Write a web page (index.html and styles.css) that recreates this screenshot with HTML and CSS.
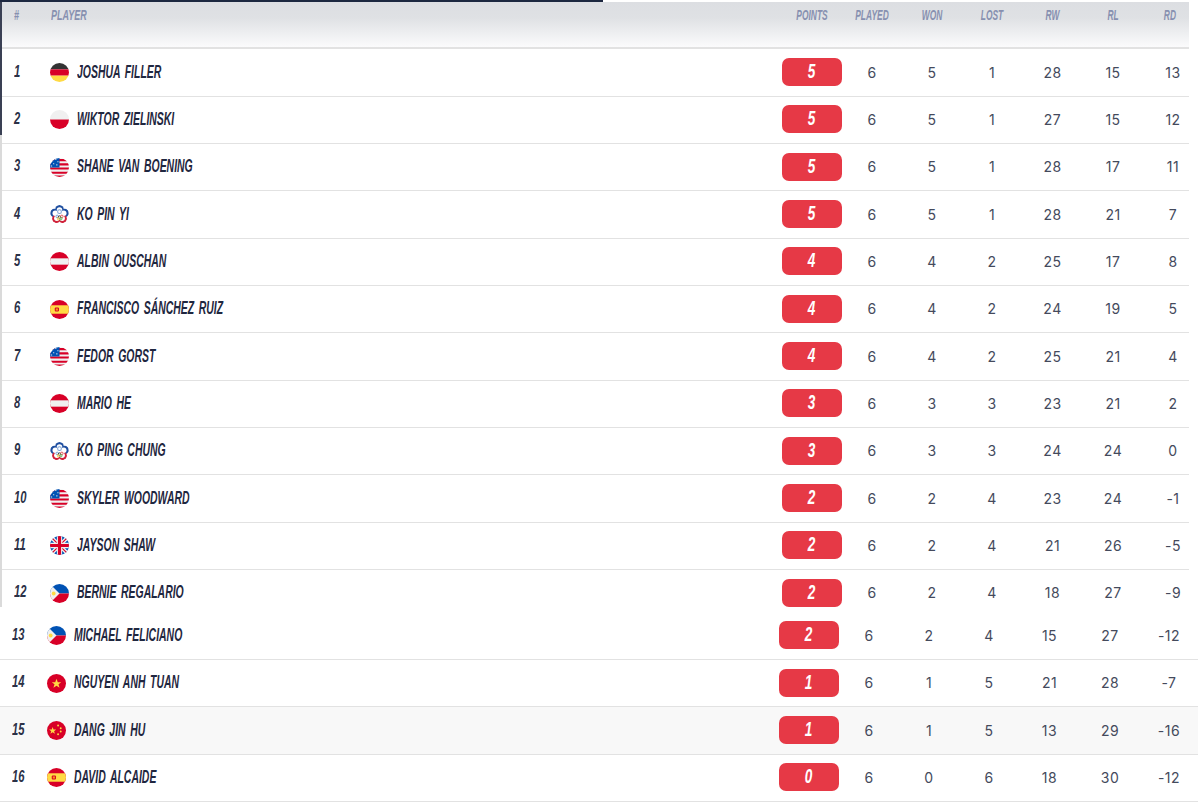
FILE: index.html
```html
<!DOCTYPE html>
<html lang="en">
<head>
<meta charset="utf-8">
<title>Standings</title>
<link rel="stylesheet" href="styles.css">
</head>
<body>
<svg class="defs" width="0" height="0" aria-hidden="true">
  <symbol id="de" viewBox="0 0 18 18"><rect width="18" height="6" fill="#333"/><rect y="6" width="18" height="6" fill="#d80027"/><rect y="12" width="18" height="6" fill="#ffda44"/></symbol>
  <symbol id="pl" viewBox="0 0 18 18"><rect width="18" height="9" fill="#f0f0f0"/><rect y="9" width="18" height="9" fill="#d80027"/></symbol>
  <symbol id="at" viewBox="0 0 18 18"><rect width="18" height="18" fill="#d80027"/><rect y="6" width="18" height="6" fill="#f0f0f0"/></symbol>
  <symbol id="us" viewBox="0 0 18 18"><rect width="18" height="18" fill="#f0f0f0"/><path d="M0 1h18v2H0zM0 5h18v2H0zM0 9h18v2H0zM0 13h18v2H0zM0 16.500h18V18H0z" fill="#d80027"/><rect width="9" height="9" fill="#0052b4"/><path d="M2 2h1v1H2zM5 1h1v1H5zM7 3h1v1H7zM3 5h1v1H3zM6 6h1v1H6zM1 7h1v1H1z" fill="#f0f0f0"/></symbol>
  <symbol id="es" viewBox="0 0 18 18"><rect width="18" height="18" fill="#d80027"/><rect y="5" width="18" height="8" fill="#ffda44"/><rect x="4.500" y="7" width="4" height="4" rx="1" fill="#d80027"/><rect x="5.500" y="8" width="2" height="2" fill="#ff9811"/></symbol>
  <symbol id="tw" viewBox="0 0 18 18"><g fill="#1f4fa0"><circle cx="9" cy="4" r="4"/><circle cx="13.800" cy="7.500" r="4"/><circle cx="4.200" cy="7.500" r="4"/></g><g fill="#d0213a"><circle cx="12" cy="13.100" r="4"/><circle cx="6" cy="13.100" r="4"/></g><g fill="#fff"><circle cx="9" cy="4.700" r="2.600"/><circle cx="13" cy="7.800" r="2.600"/><circle cx="11.500" cy="12.500" r="2.600"/><circle cx="6.500" cy="12.500" r="2.600"/><circle cx="5" cy="7.800" r="2.600"/><circle cx="9" cy="9" r="3.600"/></g><circle cx="9" cy="6.300" r="1.800" fill="none" stroke="#7fa3d6"/><g fill="none" stroke-width=".9"><circle cx="6.800" cy="10.800" r="1.200" stroke="#6ea0d8"/><circle cx="9" cy="11.500" r="1.200" stroke="#333"/><circle cx="11.200" cy="10.800" r="1.200" stroke="#e05050"/><circle cx="8" cy="13" r="1.100" stroke="#ffc83d"/><circle cx="10.300" cy="13" r="1.100" stroke="#5cb85c"/></g></symbol>
  <symbol id="gb" viewBox="0 0 18 18"><rect width="18" height="18" fill="#0052b4"/><path d="M0 0 18 18M18 0 0 18" stroke="#f0f0f0" stroke-width="3.600"/><path d="M0 0 18 18M18 0 0 18" stroke="#d80027" stroke-width="1.100"/><path d="M9 0v18M0 9h18" stroke="#f0f0f0" stroke-width="5"/><path d="M9 0v18M0 9h18" stroke="#d80027" stroke-width="3"/></symbol>
  <symbol id="ph" viewBox="0 0 18 18"><rect width="18" height="9" fill="#0052b4"/><rect y="9" width="18" height="9" fill="#d80027"/><path d="M0 0 9 9 0 18z" fill="#f0f0f0"/><circle cx="3.500" cy="9" r="1.800" fill="#ffda44"/></symbol>
  <symbol id="vn" viewBox="0 0 18 18"><rect width="18" height="18" fill="#d80027"/><path d="m9 4.600 1.200 3.100h3.300l-2.600 2 1 3.300L9 11.100 6.100 13l1-3.300-2.600-2h3.300z" fill="#ffda44"/></symbol>
  <symbol id="cn" viewBox="0 0 18 18"><rect width="18" height="18" fill="#d80027"/><path d="m5.300 5.800.9 2.300h2.500l-2 1.500.8 2.500-2.200-1.500-2.100 1.500.8-2.500-2-1.500h2.500z" fill="#ffda44"/><g fill="#ffda44"><circle cx="10.500" cy="4.300" r=".9"/><circle cx="13" cy="6.800" r=".9"/><circle cx="13" cy="10" r=".9"/><circle cx="10.500" cy="12.500" r=".9"/></g></symbol>
</svg>

<div class="top-bar"></div>
<section class="upper">
  <div class="strip"><div class="strip-dark"></div><div class="strip-light"></div></div>
  <div class="table">
    <div class="row head"><span class="l">#</span><span class="l pl">Player</span><span class="c">Points</span><span class="c">Played</span><span class="c">Won</span><span class="c">Lost</span><span class="c">RW</span><span class="c">RL</span><span class="c">RD</span></div>
    <div class="row"><span class="rank">1</span><span class="player"><svg class="flag"><use href="#de"/></svg><span class="name">Joshua Filler</span></span><span class="pts"><span class="val">5</span></span><span class="n">6</span><span class="n">5</span><span class="n">1</span><span class="n">28</span><span class="n">15</span><span class="n">13</span></div>
    <div class="row"><span class="rank">2</span><span class="player"><svg class="flag"><use href="#pl"/></svg><span class="name">Wiktor Zielinski</span></span><span class="pts"><span class="val">5</span></span><span class="n">6</span><span class="n">5</span><span class="n">1</span><span class="n">27</span><span class="n">15</span><span class="n">12</span></div>
    <div class="row"><span class="rank">3</span><span class="player"><svg class="flag"><use href="#us"/></svg><span class="name">Shane Van Boening</span></span><span class="pts"><span class="val">5</span></span><span class="n">6</span><span class="n">5</span><span class="n">1</span><span class="n">28</span><span class="n">17</span><span class="n">11</span></div>
    <div class="row"><span class="rank">4</span><span class="player"><svg class="flag"><use href="#tw"/></svg><span class="name">Ko Pin Yi</span></span><span class="pts"><span class="val">5</span></span><span class="n">6</span><span class="n">5</span><span class="n">1</span><span class="n">28</span><span class="n">21</span><span class="n">7</span></div>
    <div class="row"><span class="rank">5</span><span class="player"><svg class="flag"><use href="#at"/></svg><span class="name">Albin Ouschan</span></span><span class="pts"><span class="val">4</span></span><span class="n">6</span><span class="n">4</span><span class="n">2</span><span class="n">25</span><span class="n">17</span><span class="n">8</span></div>
    <div class="row"><span class="rank">6</span><span class="player"><svg class="flag"><use href="#es"/></svg><span class="name">Francisco Sánchez Ruiz</span></span><span class="pts"><span class="val">4</span></span><span class="n">6</span><span class="n">4</span><span class="n">2</span><span class="n">24</span><span class="n">19</span><span class="n">5</span></div>
    <div class="row"><span class="rank">7</span><span class="player"><svg class="flag"><use href="#us"/></svg><span class="name">Fedor Gorst</span></span><span class="pts"><span class="val">4</span></span><span class="n">6</span><span class="n">4</span><span class="n">2</span><span class="n">25</span><span class="n">21</span><span class="n">4</span></div>
    <div class="row"><span class="rank">8</span><span class="player"><svg class="flag"><use href="#at"/></svg><span class="name">Mario He</span></span><span class="pts"><span class="val">3</span></span><span class="n">6</span><span class="n">3</span><span class="n">3</span><span class="n">23</span><span class="n">21</span><span class="n">2</span></div>
    <div class="row"><span class="rank">9</span><span class="player"><svg class="flag"><use href="#tw"/></svg><span class="name">Ko Ping Chung</span></span><span class="pts"><span class="val">3</span></span><span class="n">6</span><span class="n">3</span><span class="n">3</span><span class="n">24</span><span class="n">24</span><span class="n">0</span></div>
    <div class="row"><span class="rank">10</span><span class="player"><svg class="flag"><use href="#us"/></svg><span class="name">Skyler Woodward</span></span><span class="pts"><span class="val">2</span></span><span class="n">6</span><span class="n">2</span><span class="n">4</span><span class="n">23</span><span class="n">24</span><span class="n">-1</span></div>
    <div class="row"><span class="rank">11</span><span class="player"><svg class="flag"><use href="#gb"/></svg><span class="name">Jayson Shaw</span></span><span class="pts"><span class="val">2</span></span><span class="n">6</span><span class="n">2</span><span class="n">4</span><span class="n">21</span><span class="n">26</span><span class="n">-5</span></div>
    <div class="row"><span class="rank">12</span><span class="player"><svg class="flag"><use href="#ph"/></svg><span class="name">Bernie Regalario</span></span><span class="pts"><span class="val">2</span></span><span class="n">6</span><span class="n">2</span><span class="n">4</span><span class="n">18</span><span class="n">27</span><span class="n">-9</span></div>
  </div>
</section>
<section class="lower">
  <div class="row"><span class="rank">13</span><span class="player"><svg class="flag"><use href="#ph"/></svg><span class="name">Michael Feliciano</span></span><span class="pts"><span class="val">2</span></span><span class="n">6</span><span class="n">2</span><span class="n">4</span><span class="n">15</span><span class="n">27</span><span class="n">-12</span></div>
  <div class="row"><span class="rank">14</span><span class="player"><svg class="flag"><use href="#vn"/></svg><span class="name">Nguyen Anh Tuan</span></span><span class="pts"><span class="val">1</span></span><span class="n">6</span><span class="n">1</span><span class="n">5</span><span class="n">21</span><span class="n">28</span><span class="n">-7</span></div>
  <div class="row shade"><span class="rank">15</span><span class="player"><svg class="flag"><use href="#cn"/></svg><span class="name">Dang Jin Hu</span></span><span class="pts"><span class="val">1</span></span><span class="n">6</span><span class="n">1</span><span class="n">5</span><span class="n">13</span><span class="n">29</span><span class="n">-16</span></div>
  <div class="row"><span class="rank">16</span><span class="player"><svg class="flag"><use href="#es"/></svg><span class="name">David Alcaide</span></span><span class="pts"><span class="val">0</span></span><span class="n">6</span><span class="n">0</span><span class="n">6</span><span class="n">18</span><span class="n">30</span><span class="n">-12</span></div>
</section>
</body>
</html>
```
FILE: styles.css
```css
* { box-sizing: border-box; }
html, body { margin: 0; padding: 0; background: #fff; }
body { width: 1200px; height: 811px; overflow: hidden; font-family: "Inter", "Liberation Sans", sans-serif; }
.defs { display: block; height: 0; }

.top-bar { width: 603px; height: 2px; background: #1c2740; }

.upper { display: flex; width: 1189px; height: 605px; overflow: hidden; }
.strip { display: flex; flex-direction: column; flex: 0 0 2px; }
.strip-dark { height: 133px; background: #3a4054; }
.strip-light { flex: 1; background: #dadada; }
.table { flex: 1; min-width: 0; }

.row {
  display: grid;
  align-items: center;
  height: 47.33px;
  border-bottom: 1px solid #e2e2e2;
}
.upper .row { grid-template-columns: 48px 1fr 60px 60px 60px 60px 61px 60px 46px; }
.upper .n:last-child { padding-left: 14px; }
.upper .c:last-child { padding-left: 14px; }
.lower { width: 1198px; padding-top: 5.7px; }
.lower .row { grid-template-columns: 47px 1fr 60px 60px 60px 60px 61px 60px 58px; }
.shade { background: #f8f8f8; }

.head {
  height: 47.4px;
  align-items: start;
  padding-top: 4px;
  background: linear-gradient(#dcdee2 0%, #dfe1e4 35%, #fbfbfc 100%);
  border-bottom: 2px solid #e2e2e2;
  color: #8790b0;
  font: italic 700 15px/18px "Liberation Sans", sans-serif;
  text-transform: uppercase;
}
.head .l { margin-left: 12px; transform: scaleX(.6); transform-origin: left; }
.head .pl { margin-left: 1px; }
.head .c { text-align: center; transform: scaleX(.56); }

.rank, .player, .pts { font-family: "Liberation Sans", sans-serif; font-style: italic; font-weight: 700; }
.rank {
  margin-left: 12px;
  padding-bottom: 2px;
  font-size: 17px;
  color: #2b3147;
  transform: scaleX(.66);
  transform-origin: left;
}
.player { display: flex; align-items: center; color: #1f2740; text-transform: uppercase; }
.name { display: inline-block; padding-bottom: 2px; font-size: 19px; word-spacing: 3px; white-space: nowrap; transform: scaleX(.55); transform-origin: left; }
.flag { flex: none; width: 19px; height: 19px; margin-right: 8px; border-radius: 50%; }
.pts {
  height: 28px;
  margin-bottom: 1px;
  border-radius: 7px;
  background: #e63946;
  color: #fff;
  font-size: 20px;
  line-height: 27px;
  text-align: center;
}
.val { display: inline-block; transform: scaleX(.68); }
.n { padding-bottom: 1px; text-align: center; font-size: 14px; letter-spacing: .5px; color: #444a5c; }
```
